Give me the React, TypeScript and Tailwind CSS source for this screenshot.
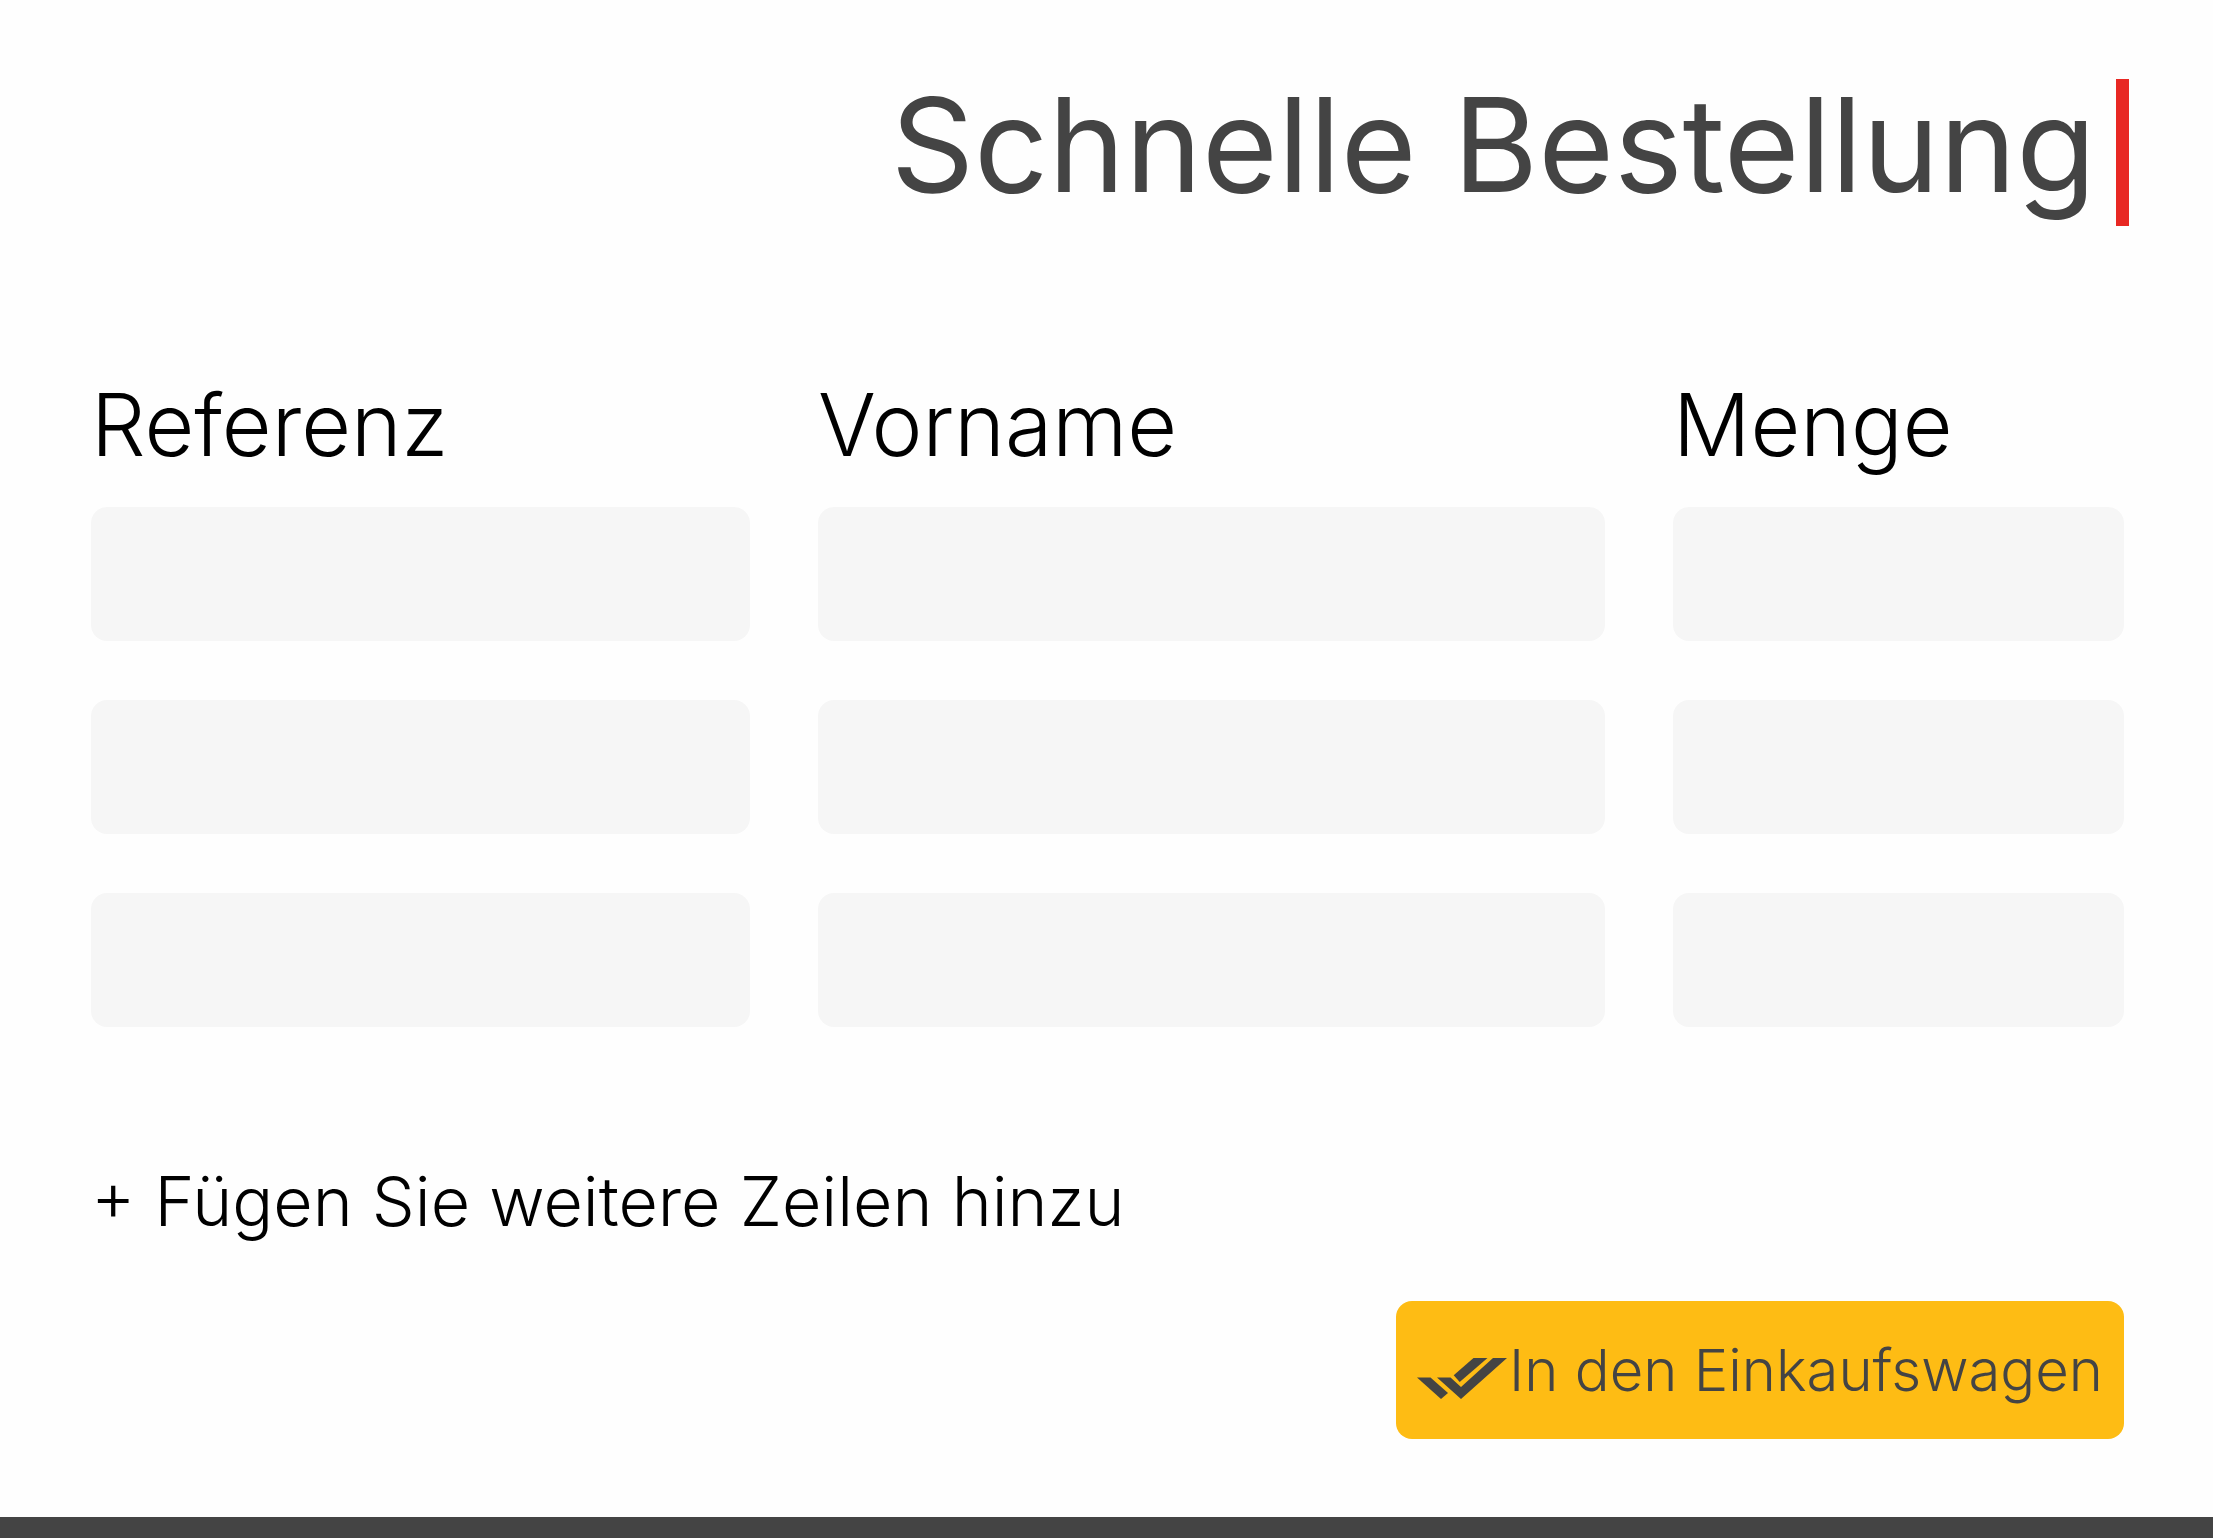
import { useState } from 'react';
import type { FormEvent } from 'react';

interface Column {
  key: string;
  label: string;
}

const columns: Column[] = [
  { key: 'reference', label: 'Referenz' },
  { key: 'name', label: 'Vorname' },
  { key: 'quantity', label: 'Menge' },
];

function DoubleCheckIcon() {
  return (
    <svg viewBox="0 0 90 41" className="mt-4 h-[41px] w-[90px] shrink-0" fill="currentColor" aria-hidden="true">
      <path d="M0 19.5H13.5L31 35L24 41Z" />
      <path d="M20 19.5H33.5L44 29L76 0H90L44 41Z" />
      <path d="M36.7 17.3L56.5 0H70.5L42.7 24Z" />
    </svg>
  );
}

export default function App() {
  const [rows, setRows] = useState([1, 2, 3]);

  const addRow = () => setRows([...rows, rows.length + 1]);

  const handleSubmit = (e: FormEvent) => {
    e.preventDefault();
  };

  return (
    <div className="flex min-h-screen flex-col bg-[#fefefe] font-['Inter',sans-serif] font-light text-black">
      <header className="flex justify-end pt-[79px] pr-[84px]">
        <h1 className="border-r-[13px] border-[#e82823] pr-5 pb-[15px] text-[130px] leading-[132px] font-normal text-[#444444]">
          Schnelle Bestellung
        </h1>
      </header>

      <form onSubmit={handleSubmit} className="flex grow flex-col pt-[149px] pr-[89px] pl-[91px]">
        <div className="grid grid-cols-[659fr_787fr_451fr] gap-x-[68px]">
          {columns.map((col) => (
            <label key={col.key} htmlFor={`${col.key}-1`} className="pb-8 text-[86px] leading-[100px]">
              {col.label}
            </label>
          ))}
        </div>

        <div className="grid grid-cols-[659fr_787fr_451fr] gap-x-[68px] gap-y-[59px]">
          {rows.map((row) =>
            columns.map((col) => (
              <input
                key={`${col.key}-${row}`}
                id={`${col.key}-${row}`}
                type="text"
                aria-label={`${col.label} ${row}`}
                className="h-[134px] w-full min-w-0 rounded-2xl bg-[#f6f6f6] px-8 text-[58px]"
              />
            ))
          )}
        </div>

        <button type="button" onClick={addRow} className="mt-[126px] self-start text-[68px] leading-[96px]">
          + Fügen Sie weitere Zeilen hinzu
        </button>

        <button
          type="submit"
          className="mt-[52px] mb-[77px] flex h-[138px] items-center gap-0.5 self-end rounded-2xl bg-[#febc14] px-[21px] text-[58px] text-[#444444]"
        >
          <DoubleCheckIcon />
          In den Einkaufswagen
        </button>
      </form>

      <footer className="h-[21px] bg-[#444444]" />
    </div>
  );
}
